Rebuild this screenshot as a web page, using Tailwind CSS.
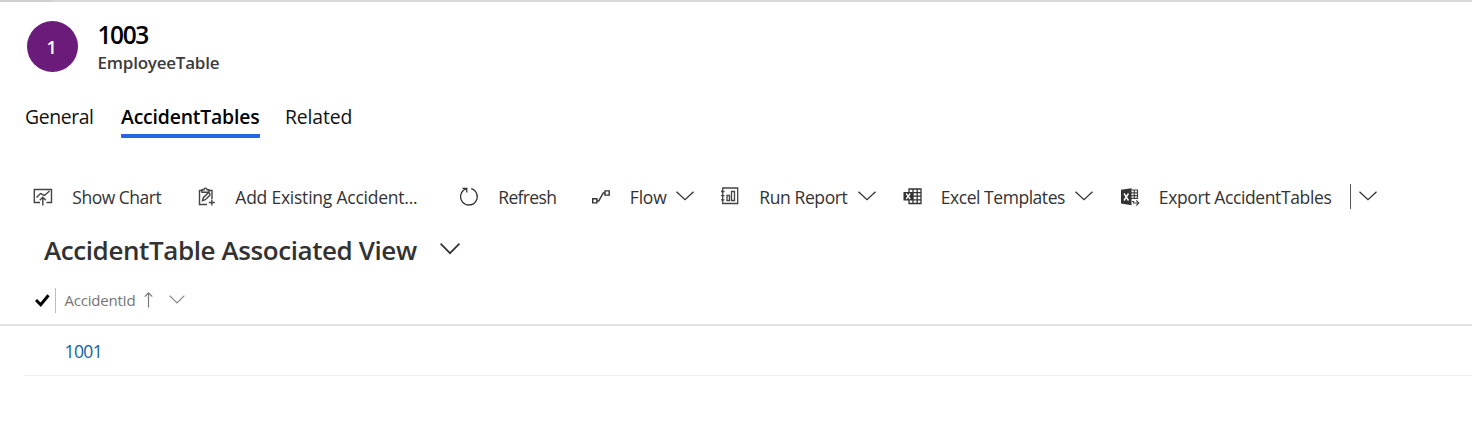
<!DOCTYPE html>
<html lang="en">
<head>
<meta charset="utf-8">
<title>1003 - EmployeeTable</title>
<script src="https://cdn.jsdelivr.net/npm/@tailwindcss/browser@4"></script>
</head>
<body class="bg-white font-['Open_Sans',sans-serif] h-[427px] overflow-hidden whitespace-nowrap">
<div class="flex h-[1.5px]"><div class="w-[52px] bg-[#cfcfcf]"></div><div class="flex-1 bg-[#dadada]"></div></div>

<header class="flex pl-[27px] pt-[19.5px] h-[95.5px]">
  <div class="size-[50.5px] rounded-full bg-[#6b1c7b] text-white text-[18px] font-semibold flex items-center justify-center pr-[1px] pt-[2px]">1</div>
  <div class="ml-[20px]">
    <h1 class="text-[24.5px] leading-[28px] font-semibold tracking-[-1.4px] text-black">1003</h1>
    <p class="text-[17px] leading-[27px] font-semibold tracking-[-0.22px] text-[#3b3b3b]">EmployeeTable</p>
  </div>
</header>

<nav class="flex h-[80px] pl-[25px] text-[19.4px] leading-[40px] text-[#111]">
  <div class="w-[96px] tracking-[-0.4px]">General</div>
  <div class="w-[139px] h-[41px] font-semibold text-black tracking-[-0.18px] border-b-4 border-[#2266e3] rounded-b-[1px]">AccidentTables</div>
  <div class="ml-[25px] tracking-[-0.15px]">Related</div>
</nav>

<div role="toolbar" class="flex items-center h-[41px] pl-[33.3px] text-[17.5px] text-[#333]">
  <div class="flex items-center w-[164px]">
    <svg class="w-5 h-5 mr-[19px] mt-[-1px]" viewBox="0 0 20 20" fill="none" stroke="#444" stroke-width="1.4"><path d="M7 15.500H1.300V2.500h17.200v13h-5M3.500 10.500l4-4 4 2 5-4.500M9.800 18.500V10.500M6.800 13.300l3-3 3 3"/></svg>
    <span class="tracking-[-0.5px]">Show Chart</span>
  </div>
  <div class="flex items-center w-[261.5px]">
    <svg class="w-5 h-5 mr-[18px] mt-[-1px]" viewBox="0 0 20 20" fill="none" stroke="#444" stroke-width="1.4"><path d="M10 17.500H2.500V3.500H5M12 3.500h3V12M5 2.800h2q0-1.700 1.500-1.700T10 2.800h2v2.400H5zM5.500 13.700l.8-3 4.500-4.500q1-.6 1.800.2t.2 1.800L8.300 12.700zM14.800 12.500v6M11.800 15.500h6"/></svg>
    <span class="tracking-[-0.23px]">Add Existing Accident...</span>
  </div>
  <div class="flex items-center w-[133px]">
    <svg class="w-5 h-5 mr-[19.5px] mt-[-1px]" viewBox="0 0 20 20" fill="none" stroke="#333" stroke-width="1.300"><path d="M12.200 1.700A8.300 8.300 0 1 1 7 1.900M3.500 1.400h4.300v4.200"/></svg>
    <span class="tracking-[-0.65px]">Refresh</span>
  </div>
  <div class="flex items-center w-[129.5px]">
    <svg class="w-5 h-5 mr-[18px]" viewBox="0 0 20 20" fill="none" stroke="#333" stroke-width="1.4"><path d="M.7 10.700h4.200v4.200H.7zM13 2.900h4.200v4.200H13zM4.900 13h1.800L11.200 5H13"/></svg>
    <span class="tracking-[-0.2px] w-[46px]">Flow</span>
    <svg class="w-[18px] h-[10px] mt-[-3px]" viewBox="0 0 18 10" fill="none" stroke="#333" stroke-width="1.3"><path d="M.5.700l8.500 8 8.500-8"/></svg>
  </div>
  <div class="flex items-center w-[181.5px]">
    <svg class="w-5 h-5 mr-[18px] mt-[-3px]" viewBox="0 0 20 20" fill="none" stroke="#444" stroke-width="1.300"><path d="M1.700 2h15v15.500h-15zM0 5.500h3.500M0 9.700h3.500M0 13.900h3.500M6 9.500h2.500v5H6zM10.500 5.500h3v9h-3z"/></svg>
    <span class="tracking-[-0.4px] w-[99px]">Run Report</span>
    <svg class="w-[18px] h-[10px] mt-[-3px]" viewBox="0 0 18 10" fill="none" stroke="#333" stroke-width="1.3"><path d="M.5.700l8.500 8 8.500-8"/></svg>
  </div>
  <div class="flex items-center w-[217.5px]">
    <svg class="w-5 h-5 mr-[18px] mt-[-3px]" viewBox="0 0 20 20" fill="none" stroke="#333" stroke-width="1.300"><path d="M6 6V3h12v14.500H6V14M10 6.600h8M10 10.200h8M10 13.800h8M10 3v14.500M14.200 3v14.500"/><path fill="#333" stroke="none" d="M.5 6h9.500v8.500H.5z"/><path stroke="#fff" d="M3.200 7.500l4 5.500M7.200 7.500l-4 5.500"/></svg>
    <span class="tracking-[-0.46px] w-[134.500px]">Excel Templates</span>
    <svg class="w-[18px] h-[10px] mt-[-3px]" viewBox="0 0 18 10" fill="none" stroke="#333" stroke-width="1.3"><path d="M.5.700l8.500 8 8.500-8"/></svg>
  </div>
  <div class="flex items-center">
    <svg class="w-5 h-5 mr-[18.500px] mt-[-2px]" viewBox="0 0 20 20" fill="none" stroke="#444" stroke-width="1.200"><path d="M11 3h6.500v9M11 5.800h6.500M11 8.600h6.500M11 11.400h6.500M14.300 3v9M12 14.500h1.500v1.500h5M16.300 13.300l2.500 2.700-2.500 2.700"/><path fill="#333" stroke="none" d="M1 2.800l10.500-1.500v17L1 16.600z"/><path stroke="#fff" stroke-width="1.400" d="M4 6.500l4.500 7M8.500 6.500L4 13.500"/></svg>
    <span class="tracking-[-0.375px] w-[191px]">Export AccidentTables</span>
    <div class="w-[1.300px] h-[25px] bg-[#555] -mt-[2px] mr-[8px]"></div>
    <svg class="w-[18px] h-[10px] mt-[-3px]" viewBox="0 0 18 10" fill="none" stroke="#333" stroke-width="1.3"><path d="M.5.700l8.500 8 8.500-8"/></svg>
  </div>
</div>

<div class="flex items-center h-[64px] pl-[44px] text-[#323232]">
  <h2 class="text-[26px] font-semibold tracking-[-0.41px] w-[396px]">AccidentTable Associated View</h2>
  <svg class="w-[20px] h-[12px] mt-[-3px]" viewBox="0 0 20 12" fill="none" stroke="#333" stroke-width="1.700"><path d="M.6.700l9.400 9.500 9.400-9.500"/></svg>
</div>

<div class="flex items-center h-[44px] pl-[35px] pb-[6px] border-b-2 border-[#e3e3e3] text-[#757575]">
  <svg class="w-[15px] h-[13px]" viewBox="0 0 15 13" fill="none" stroke="#000" stroke-width="3"><path d="M1 6l4.700 4.700L13.500 1.200"/></svg>
  <div class="w-px h-[25px] bg-[#bdbdbd] ml-[5px] mr-[8.500px]"></div>
  <span class="text-[15px] tracking-[-0.22px] w-[79.500px]">AccidentId</span>
  <svg class="w-[9px] h-[16px]" viewBox="0 0 9 16" fill="none" stroke="#777" stroke-width="1.200"><path d="M4.500 15.500V1M.7 4.700L4.500.900l3.800 3.800"/></svg>
  <svg class="w-[16px] h-[9px] ml-[16px] mt-[-2px]" viewBox="0 0 16 9" fill="none" stroke="#888" stroke-width="1.200"><path d="M.6.600L8 8 15.400.600"/></svg>
</div>
<div class="ml-6 pl-[40.5px] h-[50px] border-b border-[#efefef] flex items-center pt-[1px] text-[17.5px] tracking-[-0.6px] text-[#115ea3]">1001</div>
</body>
</html>
